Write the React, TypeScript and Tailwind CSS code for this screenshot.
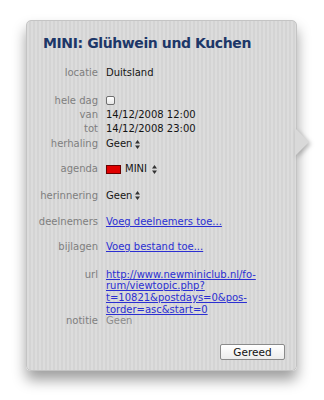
import React from "react";

const font = { fontFamily: '"DejaVu Sans", "Liberation Sans", sans-serif' };

const Stepper = () => (
    <svg width="5" height="9" viewBox="0 0 5 9" className="ml-[3px] inline-block">
        <polygon points="2.5,0 5,3.5 0,3.5" fill="#333" />
        <polygon points="0,5.5 5,5.5 2.5,9" fill="#333" />
    </svg>
);

const Row = ({ label, children, className = "" }: { label: string; children: React.ReactNode; className?: string }) => (
    <div className={`flex leading-[14px] ${className}`}>
        <div className="w-[61px] shrink-0 text-right text-[#7e7e7e]">{label}</div>
        <div className="ml-[8px] text-[#141414]">{children}</div>
    </div>
);

const Link = ({ children }: { children: React.ReactNode }) => (
    <span className="text-[#2b2fd2] underline underline-offset-[1px]">{children}</span>
);

export default function App() {
    return (
        <div className="min-h-[400px] w-[324px] bg-white pt-[20px] pl-[26px]" style={font}>
            <div className="relative w-[271px] rounded-[5px] border border-[#c4c4c4] bg-[repeating-linear-gradient(90deg,#dcdcdc_0px,#dcdcdc_2px,#d4d4d4_2px,#d4d4d4_4px)] pt-[12px] pr-[11px] pb-[10px] pl-[10px] text-[10px] shadow-[0_9px_14px_rgba(0,0,0,0.38)]">
                <svg width="15" height="28" viewBox="0 0 15 28" className="absolute right-[-14px] top-[107px] drop-shadow-[2px_2px_2px_rgba(0,0,0,0.25)]">
                    <polygon points="0,0 14,14 0,28" fill="#d9d9d9" />
                </svg>

                <h1 className="ml-[6px] text-[14px] font-bold leading-[20px] tracking-[-0.4px] text-[#1d3768]">
                    MINI: Glühwein und Kuchen
                </h1>

                <Row label="locatie" className="mt-[13px]">Duitsland</Row>

                <Row label="hele dag" className="mt-[14px]">
                    <span className="mt-[2px] inline-block h-[9px] w-[9px] rounded-[2px] border border-[#6f6f6f] bg-gradient-to-b from-white to-[#e6e6e6] align-top" />
                </Row>
                <Row label="van">14/12/2008 12:00</Row>
                <Row label="tot">14/12/2008 23:00</Row>
                <Row label="herhaling" className="mt-px">
                    <span className="inline-flex items-center">Geen<Stepper /></span>
                </Row>

                <Row label="agenda" className="mt-[11px]">
                    <span className="inline-flex items-center">
                        <span className="mr-[4px] inline-block h-[9px] w-[15px] border border-[#6b0000] bg-[#e00000]" />
                        MINI
                        <span className="ml-[2px]"><Stepper /></span>
                    </span>
                </Row>

                <Row label="herinnering" className="mt-[11px]">
                    <span className="inline-flex items-center">Geen<Stepper /></span>
                </Row>

                <Row label="deelnemers" className="mt-[12px]">
                    <Link>Voeg deelnemers toe...</Link>
                </Row>

                <Row label="bijlagen" className="mt-[11px]">
                    <Link>Voeg bestand toe...</Link>
                </Row>

                <div className="mt-[15px] flex leading-[11.7px]">
                    <div className="w-[61px] shrink-0 text-right text-[#7e7e7e]">url</div>
                    <div className="ml-[8px]">
                        <Link>
                            http://www.newminiclub.nl/fo-
                            <br />
                            rum/viewtopic.php?
                            <br />
                            t=10821&amp;postdays=0&amp;pos-
                            <br />
                            torder=asc&amp;start=0
                        </Link>
                    </div>
                </div>
                <div className="flex leading-[11.7px]">
                    <div className="w-[61px] shrink-0 text-right text-[#7e7e7e]">notitie</div>
                    <div className="ml-[8px] text-[#8c8c8c]">Geen</div>
                </div>

                <div className="mt-[17px] flex justify-end">
                    <button className="h-[16px] w-[65px] rounded-[2px] border border-[#8a8a8a] bg-gradient-to-b from-white to-[#ececec] text-[10.5px] leading-[14px] text-[#111]">
                        Gereed
                    </button>
                </div>
            </div>
        </div>
    );
}
